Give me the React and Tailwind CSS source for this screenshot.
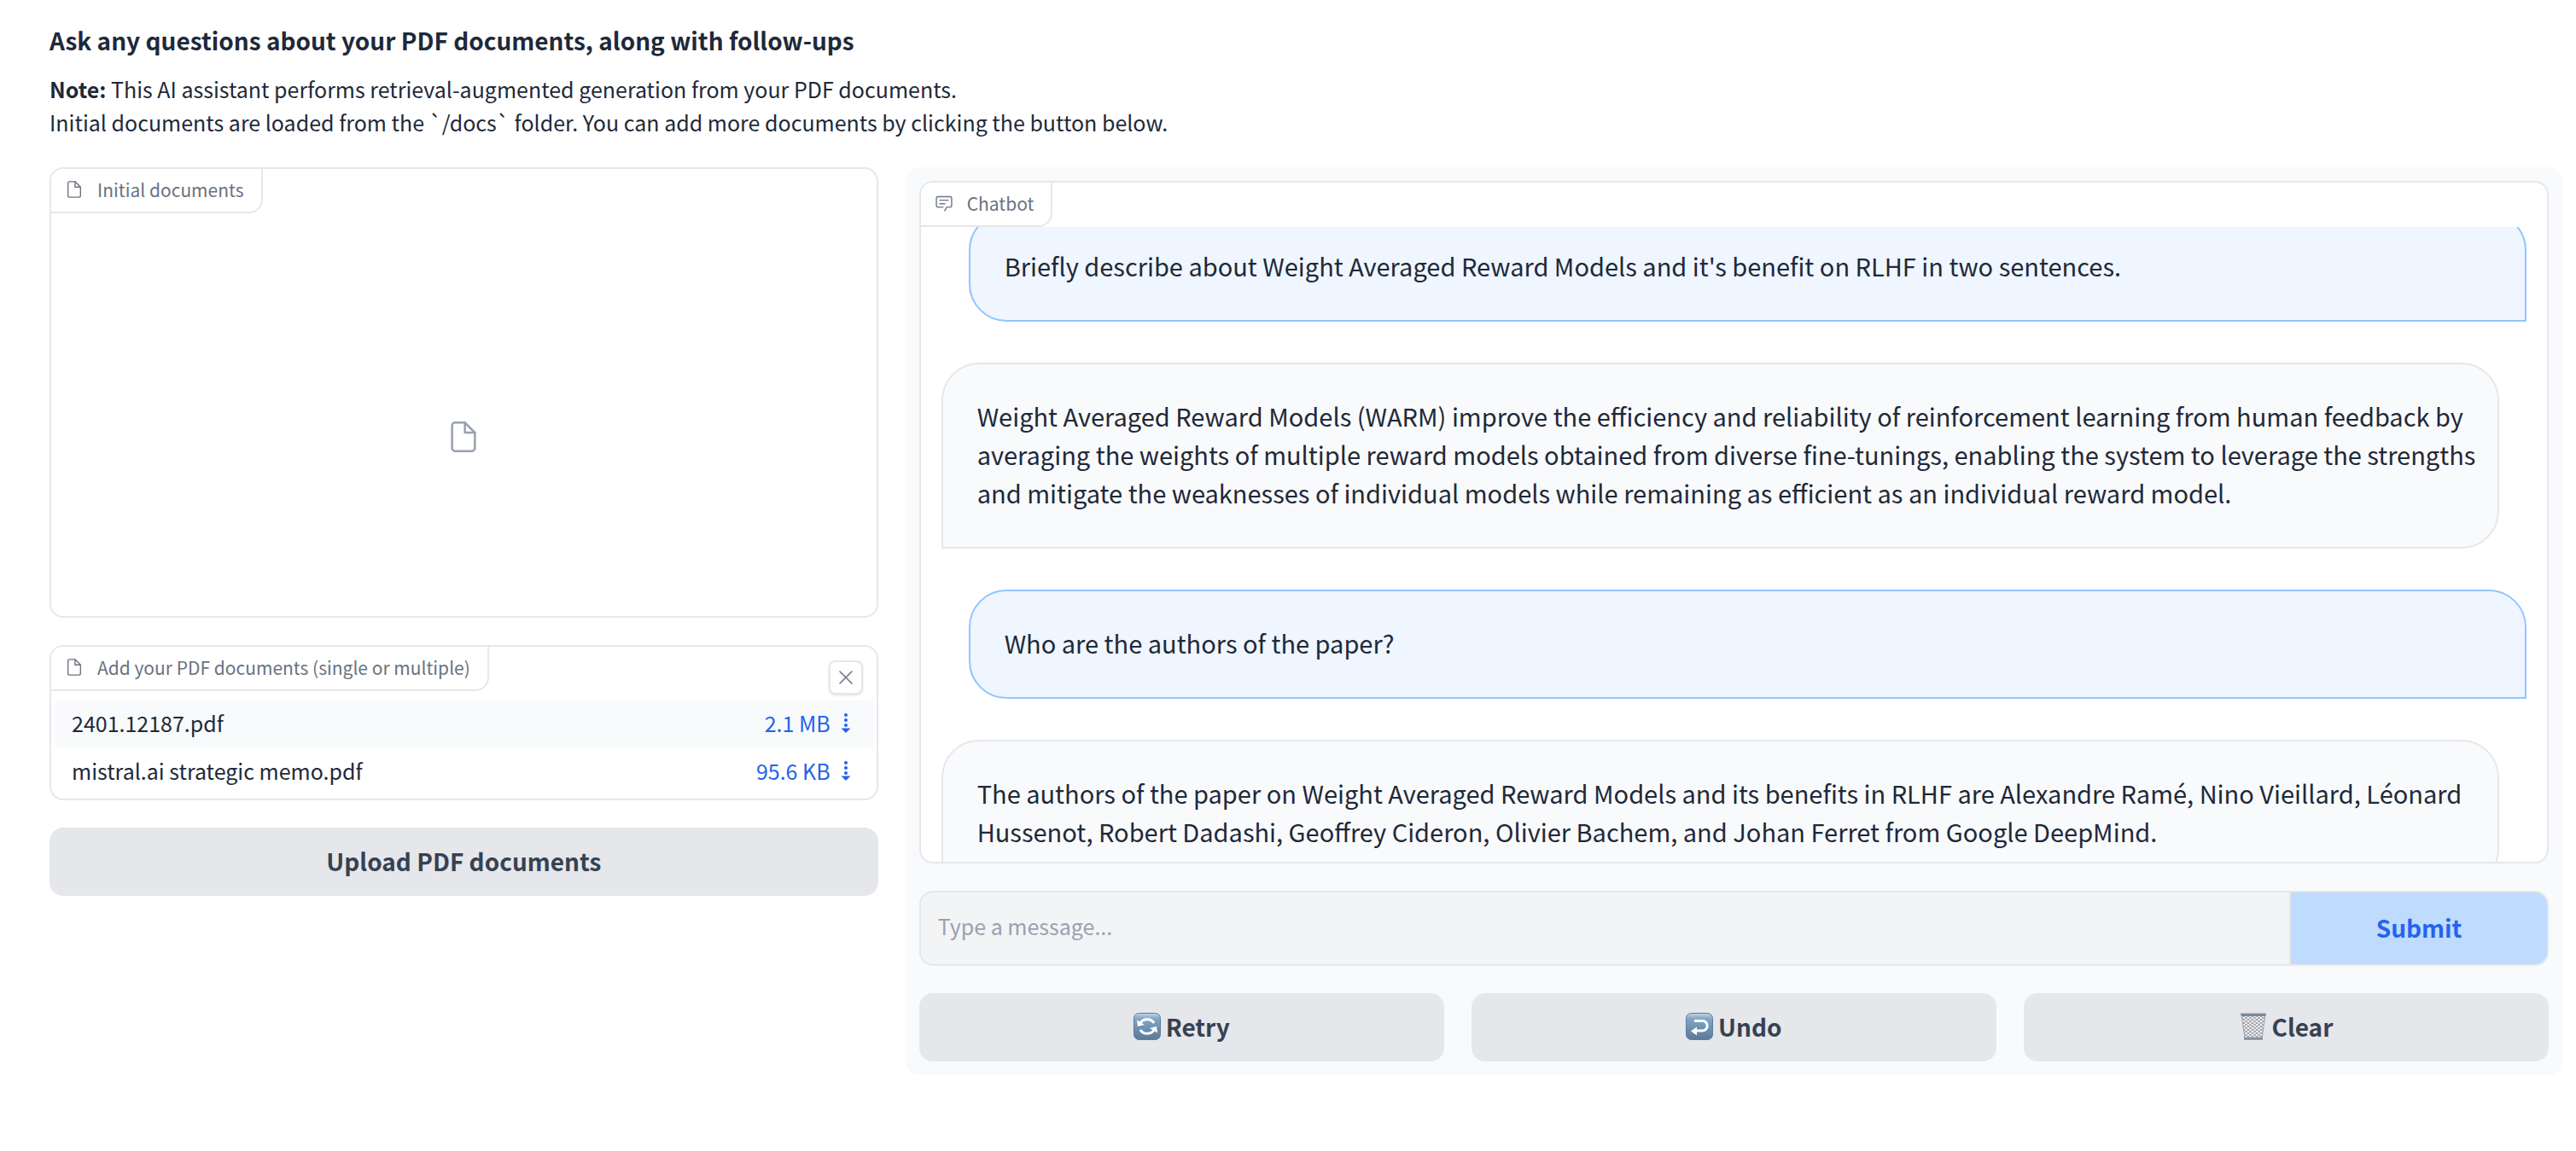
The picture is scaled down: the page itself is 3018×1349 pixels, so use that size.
import { useLayoutEffect, useRef } from "react";

const FONT = "font-['Noto_Sans_CJK_SC','Noto_Sans',sans-serif]";

function FileIcon({ className }) {
  return (
    <svg className={className} viewBox="0 0 24 24" fill="none" stroke="currentColor" strokeWidth="1.5" strokeLinecap="round" strokeLinejoin="round" aria-hidden="true">
      <path d="M13 2H6a2 2 0 0 0-2 2v16a2 2 0 0 0 2 2h12a2 2 0 0 0 2-2V9z" />
      <path d="M13 2v7h7" />
    </svg>
  );
}

function ChatIcon({ className }) {
  return (
    <svg className={className} viewBox="0 0 32 32" fill="currentColor" aria-hidden="true">
      <path d="M17.74 30L16 29l4-7h6a2 2 0 0 0 2-2V8a2 2 0 0 0-2-2H6a2 2 0 0 0-2 2v12a2 2 0 0 0 2 2h9v2H6a4 4 0 0 1-4-4V8a4 4 0 0 1 4-4h20a4 4 0 0 1 4 4v12a4 4 0 0 1-4 4h-4.84Z" />
      <path d="M8 10h16v2H8zm0 6h10v2H8z" />
    </svg>
  );
}

function DownloadIcon() {
  return (
    <svg className="h-6 w-3" viewBox="0 0 12 24" fill="currentColor" aria-hidden="true">
      <circle cx="6" cy="3" r="2" />
      <circle cx="6" cy="9" r="2" />
      <circle cx="6" cy="15" r="2" />
      <path d="M0.500 18.500h11L6 24z" />
    </svg>
  );
}

function EmojiTile({ id, children }) {
  return (
    <svg className="size-8" viewBox="0 0 32 32" fill="none" aria-hidden="true">
      <defs>
        <linearGradient id={id} x1="0" y1="0" x2="0" y2="1">
          <stop offset="0" stopColor="#c3d8e8" />
          <stop offset="0.200" stopColor="#84a7c6" />
          <stop offset="0.600" stopColor="#6d8fb0" />
          <stop offset="1" stopColor="#5d7a96" />
        </linearGradient>
      </defs>
      <rect x="0.500" y="0.500" width="31" height="31" rx="6" fill={`url(#${id})`} stroke="#5c7c9b" />
      {children}
    </svg>
  );
}

function RetryIcon() {
  return (
    <EmojiTile id="retryTile">
      <path d="M7.500 13a9 8 0 0 1 16.500-1" stroke="#fff" strokeWidth="3" />
      <path d="M24.500 19a9 8 0 0 1-16.500 1" stroke="#fff" strokeWidth="3" />
      <path d="M4 8.500l1 7.500 8-2zM28 23.500l-1-7.500-8 2z" fill="#fff" />
    </EmojiTile>
  );
}

function UndoIcon() {
  return (
    <EmojiTile id="undoTile">
      <path d="M10 9.500h9.500a5.750 5.750 0 0 1 0 11.500H12" stroke="#fff" strokeWidth="3" />
      <path d="M6 21.500l7-5v10z" fill="#fff" />
    </EmojiTile>
  );
}

function TrashIcon() {
  return (
    <svg className="size-8" viewBox="0 0 32 32" fill="none" aria-hidden="true">
      <defs>
        <pattern id="mesh" width="5" height="4" patternUnits="userSpaceOnUse">
          <path d="M0 0l5 4M5 0L0 4" stroke="#7f868e" strokeWidth="0.800" />
        </pattern>
      </defs>
      <path d="M2 2h28l-4 28H6z" fill="#f1f2f4" />
      <path d="M2 2h28l-4 28H6z" fill="url(#mesh)" stroke="#8d9399" strokeWidth="0.800" />
      <path d="M1 1.500h30" stroke="#8298ae" strokeWidth="2" />
      <path d="M2 3h28" stroke="#4c535b" strokeWidth="1" />
      <path d="M5 29.500h22" stroke="#8aa0b5" strokeWidth="2" />
      <path d="M5 31h22" stroke="#59616a" strokeWidth="1" />
    </svg>
  );
}

function BlockLabel({ icon, children }) {
  return (
    <div className="flex h-[54px] w-fit items-center gap-4 rounded-br-2xl border-r-2 border-b-2 border-gray-200 bg-white pr-5 pl-4 text-gray-500">
      {icon}
      <span className="text-[21px] leading-8">{children}</span>
    </div>
  );
}

const files = [
  { name: "2401.12187.pdf", size: "2.1 MB" },
  { name: "mistral.ai strategic memo.pdf", size: "95.6 KB" },
];

const messages = [
  { from: "user", text: "Briefly describe about Weight Averaged Reward Models and it's benefit on RLHF in two sentences." },
  { from: "bot", text: "Weight Averaged Reward Models (WARM) improve the efficiency and reliability of reinforcement learning from human feedback by averaging the weights of multiple reward models obtained from diverse fine-tunings, enabling the system to leverage the strengths and mitigate the weaknesses of individual models while remaining as efficient as an individual reward model." },
  { from: "user", text: "Who are the authors of the paper?" },
  { from: "bot", text: "The authors of the paper on Weight Averaged Reward Models and its benefits in RLHF are Alexandre Ramé, Nino Vieillard, Léonard Hussenot, Robert Dadashi, Geoffrey Cideron, Olivier Bachem, and Johan Ferret from Google DeepMind." },
];

function Bubble({ from, text }) {
  const skin =
    from === "user"
      ? "ml-8 rounded-br-none border-[#93c5fd] bg-[#eff6ff]"
      : "mr-8 rounded-bl-none border-gray-200 bg-gray-50";
  return (
    <p className={`rounded-[44px] border-2 pt-[38px] pr-5 pb-[41px] pl-10 text-[29px] leading-[45px] ${skin}`}>{text}</p>
  );
}

function ChatLog() {
  const ref = useRef(null);
  useLayoutEffect(() => {
    ref.current.scrollTop = 41;
  }, []);
  return (
    <section className="flex h-[800px] flex-col overflow-hidden rounded-2xl border-2 border-gray-200 bg-white">
      <div className="-mt-0.5 shrink-0">
        <BlockLabel icon={<ChatIcon className="size-[22px]" />}>Chatbot</BlockLabel>
      </div>
      <div ref={ref} className="flex min-h-0 flex-1 flex-col gap-12 overflow-y-auto p-6 [scrollbar-width:none]">
        {messages.map((m) => (
          <div key={m.text}>
            <Bubble {...m} />
          </div>
        ))}
      </div>
    </section>
  );
}

function SecondaryButton({ children }) {
  return (
    <button type="button" className="flex h-20 flex-1 items-center justify-center gap-1.5 rounded-2xl bg-gray-200 pb-0.5 text-[28px] leading-10 font-bold text-gray-700">
      {children}
    </button>
  );
}

export default function App() {
  return (
    <main className={`min-h-screen bg-white pt-[23px] pr-4 pl-[58px] text-gray-800 ${FONT}`}>
      <header>
        <h1 className="text-[28px] leading-12 font-bold">Ask any questions about your PDF documents, along with follow-ups</h1>
        <p className="mt-3.5 text-[25px] leading-[39px]">
          <strong className="font-bold">Note:</strong> This AI assistant performs retrieval-augmented generation from your PDF documents.
          <br />
          Initial documents are loaded from the `/docs` folder. You can add more documents by clicking the button below.
        </p>
      </header>

      <div className="mt-[33px] grid grid-cols-[1fr_2fr] items-start gap-8">
        <div className="flex min-w-0 flex-col gap-8">
          <section className="flex h-[528px] flex-col overflow-hidden rounded-2xl border-2 border-gray-200">
            <div className="-mt-0.5">
              <BlockLabel icon={<FileIcon className="size-[22px]" />}>Initial documents</BlockLabel>
            </div>
            <div className="flex flex-1 items-center justify-center pt-[52px] text-gray-400">
              <FileIcon className="size-10" />
            </div>
          </section>

          <section className="relative overflow-hidden rounded-2xl border-2 border-gray-200 pb-[3px]">
            <div className="-mt-0.5 mb-[11px]">
              <BlockLabel icon={<FileIcon className="size-[22px]" />}>Add your PDF documents (single or multiple)</BlockLabel>
            </div>
            <button type="button" aria-label="Clear files" className="absolute top-4 right-4 flex size-10 items-center justify-center rounded-lg border-2 border-gray-200 bg-white text-gray-500 shadow-sm">
              <svg className="size-4" viewBox="0 0 16 16" stroke="currentColor" strokeWidth="1.500" strokeLinecap="round" aria-hidden="true">
                <path d="M1 1l14 14M15 1L1 15" />
              </svg>
            </button>
            <div className="px-1">
              <table className="w-full text-[25px] leading-9">
                <tbody>
                  {files.map((f) => (
                    <tr key={f.name} className="h-14 odd:bg-gray-50">
                      <td className="pb-1 pl-5">{f.name}</td>
                      <td className="pr-[26px] pb-1">
                        <a href="#download" className="flex items-center justify-end gap-3 text-[#2563eb]">
                          {f.size}
                          <DownloadIcon />
                        </a>
                      </td>
                    </tr>
                  ))}
                </tbody>
              </table>
            </div>
          </section>

          <div className="flex">
            <SecondaryButton>Upload PDF documents</SecondaryButton>
          </div>
        </div>

        <div className="flex min-w-0 flex-col gap-8 rounded-2xl bg-gray-50 p-4">
          <ChatLog />
          <form className="flex h-[88px] overflow-hidden rounded-2xl border-2 border-gray-200 bg-gray-100" onSubmit={(e) => e.preventDefault()}>
            <input type="text" aria-label="Message" placeholder="Type a message..." className="min-w-0 flex-1 px-5 pb-1 text-[25px] placeholder:text-gray-400" />
            <button type="submit" className="w-[302px] border-l-2 border-gray-200 bg-[#bfdbfe] pb-0.5 text-[28px] font-bold text-[#2563eb]">Submit</button>
          </form>
          <div className="flex gap-8">
            <SecondaryButton><RetryIcon />Retry</SecondaryButton>
            <SecondaryButton><UndoIcon />Undo</SecondaryButton>
            <SecondaryButton><TrashIcon />Clear</SecondaryButton>
          </div>
        </div>
      </div>
    </main>
  );
}
